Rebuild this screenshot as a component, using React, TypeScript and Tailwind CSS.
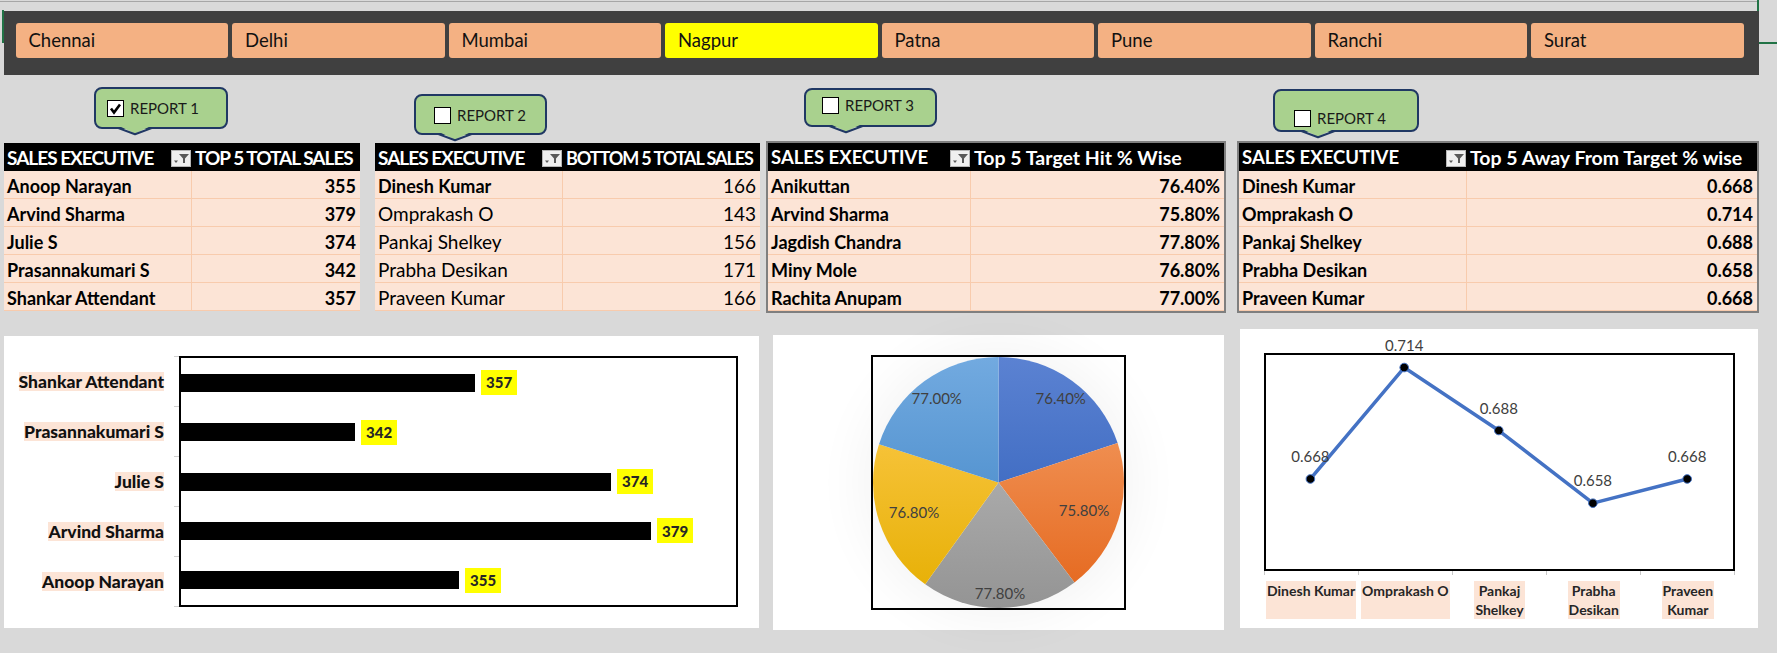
import React from 'react';

const cities = ['Chennai', 'Delhi', 'Mumbai', 'Nagpur', 'Patna', 'Pune', 'Ranchi', 'Surat'];

type Row = { name: string; value: string; bold?: boolean; numBold?: boolean };

const topSales: Row[] = [
  { name: 'Anoop Narayan', value: '355', bold: true, numBold: true },
  { name: 'Arvind Sharma', value: '379', bold: true, numBold: true },
  { name: 'Julie S', value: '374', bold: true, numBold: true },
  { name: 'Prasannakumari S', value: '342', bold: true, numBold: true },
  { name: 'Shankar Attendant', value: '357', bold: true, numBold: true },
];

const bottomSales: Row[] = [
  { name: 'Dinesh Kumar', value: '166', bold: true },
  { name: 'Omprakash O', value: '143' },
  { name: 'Pankaj Shelkey', value: '156' },
  { name: 'Prabha Desikan', value: '171' },
  { name: 'Praveen Kumar', value: '166' },
];

const targetHit: Row[] = [
  { name: 'Anikuttan', value: '76.40%', bold: true, numBold: true },
  { name: 'Arvind Sharma', value: '75.80%', bold: true, numBold: true },
  { name: 'Jagdish Chandra', value: '77.80%', bold: true, numBold: true },
  { name: 'Miny Mole', value: '76.80%', bold: true, numBold: true },
  { name: 'Rachita Anupam', value: '77.00%', bold: true, numBold: true },
];

const awayTarget: Row[] = [
  { name: 'Dinesh Kumar', value: '0.668', bold: true, numBold: true },
  { name: 'Omprakash O', value: '0.714', bold: true, numBold: true },
  { name: 'Pankaj Shelkey', value: '0.688', bold: true, numBold: true },
  { name: 'Prabha Desikan', value: '0.658', bold: true, numBold: true },
  { name: 'Praveen Kumar', value: '0.668', bold: true, numBold: true },
];

const bars = [
  { name: 'Shankar Attendant', v: 357 },
  { name: 'Prasannakumari S', v: 342 },
  { name: 'Julie S', v: 374 },
  { name: 'Arvind Sharma', v: 379 },
  { name: 'Anoop Narayan', v: 355 },
];

const slices = [
  { v: 76.4, top: '#5b82d2', bottom: '#2a5bb6' },
  { v: 75.8, top: '#f5a36c', bottom: '#e4651a' },
  { v: 77.8, top: '#bfbfbf', bottom: '#949494' },
  { v: 76.8, top: '#ffcd55', bottom: '#e5ae00' },
  { v: 77.0, top: '#72aae0', bottom: '#3a80c2' },
];

const points = [
  { lines: ['Dinesh Kumar'], v: 0.668, x: 46.4 },
  { lines: ['Omprakash O'], v: 0.714, x: 140.2 },
  { lines: ['Pankaj', 'Shelkey'], v: 0.688, x: 234.8 },
  { lines: ['Prabha', 'Desikan'], v: 0.658, x: 328.9 },
  { lines: ['Praveen', 'Kumar'], v: 0.668, x: 423.2 },
];

const FilterButton = () => (
  <div className="w-[20px] h-[17px] bg-[#efefef] border border-[#b5b5b5] flex items-center justify-center shrink-0">
    <svg width="18" height="15" viewBox="0 0 18 15">
      <path d="M7 3h10l-4 4.5V12h-2V7.5z" fill="#595959" />
      <path d="M2 9.5h4l-2 2.5z" fill="#595959" />
    </svg>
  </div>
);

function SalesTable({
  width,
  col1,
  head,
  headClass,
  head2Class,
  rows,
  framed,
}: {
  width: string;
  col1: string;
  head: string;
  headClass: string;
  head2Class: string;
  rows: Row[];
  framed?: boolean;
}) {
  return (
    <div className={`${width} shrink-0 ${framed ? 'outline-2 outline-[#7f7f7f]' : ''}`}>
      <div className="flex h-[28px] bg-black text-white">
        <div className={`${col1} flex items-center justify-between pl-[3px] pr-[1px] pt-[2px]`}>
          <span className={headClass}>SALES EXECUTIVE</span>
          <FilterButton />
        </div>
        <div className="flex-1 flex items-center pl-[3px] pt-[2px] whitespace-nowrap overflow-hidden">
          <span className={head2Class}>{head}</span>
        </div>
      </div>
      {rows.map((r) => (
        <div key={r.name} className="flex h-[28px] bg-[#fce4d6] border-b border-[#f8cbad]">
          <div
            className={`${col1} border-r border-[#f8cbad] flex items-center pl-[3px] pt-[4px] whitespace-nowrap ${
              r.bold ? 'font-bold text-[18px]' : 'text-[19px]'
            }`}
          >
            {r.name}
          </div>
          <div
            className={`flex-1 flex items-center justify-end pr-[4px] pt-[4px] ${
              r.numBold ? 'font-bold text-[18px]' : 'text-[19px]'
            }`}
          >
            {r.value}
          </div>
        </div>
      ))}
    </div>
  );
}

function Callout({
  box,
  pad,
  tip,
  label,
  checked,
}: {
  box: string;
  pad: string;
  tip: string;
  label: string;
  checked?: boolean;
}) {
  return (
    <div className={`absolute border-2 border-[#203864] rounded-[8px] bg-[#a9d18e] ${box}`}>
      <div className={`flex items-center gap-[6px] ${pad}`}>
        <div className="w-[17px] h-[17px] bg-white border-[1.5px] border-black flex items-center justify-center">
          {checked && (
            <svg width="13" height="13" viewBox="0 0 13 13">
              <path d="M2 6.5l3 4L11 2.5" fill="none" stroke="#000" strokeWidth="2.6" strokeLinejoin="miter" />
            </svg>
          )}
        </div>
        <span className="text-[15px] text-[#1a1a1a] leading-none">{label}</span>
      </div>
      <svg className={`absolute top-full ${tip}`} width="34" height="9" viewBox="0 0 34 9">
        <path d="M1 -1L17 6.5L33 -1Z" fill="#a9d18e" />
        <path d="M0 1L17 7.3L34 1" fill="none" stroke="#203864" strokeWidth="2" strokeLinejoin="round" />
      </svg>
    </div>
  );
}

function Pie() {
  const total = slices.reduce((s, x) => s + x.v, 0);
  const c = 125.5;
  const r = 125.5;
  let acc = 0;
  const paths = slices.map((s) => {
    const a0 = (acc / total) * Math.PI * 2;
    acc += s.v;
    const a1 = (acc / total) * Math.PI * 2;
    const x0 = c + r * Math.sin(a0);
    const y0 = c - r * Math.cos(a0);
    const x1 = c + r * Math.sin(a1);
    const y1 = c - r * Math.cos(a1);
    return `M${c} ${c}L${x0} ${y0}A${r} ${r} 0 0 1 ${x1} ${y1}Z`;
  });
  return (
    <svg className="absolute inset-0" width="251" height="251" viewBox="0 0 251 251">
      <defs>
        {slices.map((s, i) => (
          <linearGradient key={i} id={`pg${i}`} gradientUnits="userSpaceOnUse" x1="0" y1="0" x2="0" y2="251">
            <stop offset="0" stopColor={s.top} />
            <stop offset="1" stopColor={s.bottom} />
          </linearGradient>
        ))}
      </defs>
      {paths.map((d, i) => (
        <path key={i} d={d} fill={`url(#pg${i})`} />
      ))}
    </svg>
  );
}

export default function App() {
  const py = (v: number) => ((0.72 - v) / 0.09) * 218;

  return (
    <div className="relative w-[1777px] h-[653px] overflow-hidden bg-[#d9d9d9] [font-family:Lato,'Open_Sans',sans-serif] text-black">
      {/* sheet grid line + selected cell marks */}
      <div className="h-[11px] pt-px">
        <div className="w-[1757px] h-px bg-[#a6a6a6]" />
      </div>
      <div className="absolute left-[2px] top-[10px] w-[2px] h-[33px] bg-[#217346]" />
      <div className="absolute left-[1757px] top-0 w-[2px] h-[11px] bg-[#217346]" />
      <div className="absolute left-[1759px] top-[42px] w-[18px] h-[2px] bg-[#217346]" />

      {/* city slicer */}
      <div className="ml-[4px] w-[1755px] h-[64px] bg-[#404040] pl-[11.5px] pt-[12px] flex gap-[4px]">
        {cities.map((c) => (
          <div
            key={c}
            className={`w-[212.5px] h-[35px] rounded-[3px] flex items-center pl-[13px] pt-px text-[18.5px] text-[#111] ${
              c === 'Nagpur' ? 'bg-[#ffff00]' : 'bg-[#f4b183]'
            }`}
          >
            {c}
          </div>
        ))}
      </div>

      {/* report callouts */}
      <div className="relative h-[68px]">
        <Callout box="left-[94px] top-[12px] w-[134px] h-[42px]" pad="pl-[11px] pt-[11px]" tip="left-[22px]" label="REPORT 1" checked />
        <Callout box="left-[414px] top-[19px] w-[133px] h-[41px]" pad="pl-[18px] pt-[11px]" tip="left-[22px]" label="REPORT 2" />
        <Callout box="left-[804px] top-[13px] w-[133px] h-[39px]" pad="pl-[16px] pt-[7px]" tip="left-[23px]" label="REPORT 3" />
        <Callout box="left-[1273px] top-[14px] w-[146px] h-[43px]" pad="pl-[19px] pt-[19px]" tip="left-[26px]" label="REPORT 4" />
      </div>

      {/* tables */}
      <div className="flex items-start ml-[4px]">
        <SalesTable
          width="w-[356px]"
          col1="w-[188px]"
          head="TOP 5 TOTAL SALES"
          headClass="text-[19px] font-bold tracking-[-1px]"
          head2Class="text-[19px] font-bold tracking-[-1px]"
          rows={topSales}
        />
        <div className="w-[15px] shrink-0" />
        <SalesTable
          width="w-[385px]"
          col1="w-[188px]"
          head="BOTTOM 5 TOTAL SALES"
          headClass="text-[19px] font-bold tracking-[-1px]"
          head2Class="text-[18px] font-bold tracking-[-1.1px]"
          rows={bottomSales}
        />
        <div className="w-[8px] shrink-0" />
        <SalesTable
          width="w-[456px]"
          col1="w-[203px]"
          head="Top 5 Target Hit % Wise"
          headClass="text-[18.5px] font-bold"
          head2Class="text-[19.5px] font-bold"
          rows={targetHit}
          framed
        />
        <div className="w-[15px] shrink-0" />
        <SalesTable
          width="w-[518px]"
          col1="w-[228px]"
          head="Top 5 Away From Target % wise"
          headClass="text-[18.5px] font-bold"
          head2Class="text-[19.5px] font-bold"
          rows={awayTarget}
          framed
        />
      </div>

      {/* charts */}
      <div className="flex items-start ml-[4px] mt-[18px]">
        {/* bar chart */}
        <div className="mt-[7px] w-[755px] h-[292px] bg-white shrink-0 pt-[20px] flex">
          <div className="w-[170px] h-[251px] flex flex-col pr-[10px]">
            {bars.map((b) => (
              <div key={b.name} className="flex-1 flex items-center justify-end">
                <span className="bg-[#fce4d6] text-[17.5px] font-black leading-[19px] text-[#111]">{b.name}</span>
              </div>
            ))}
          </div>
          <div className="w-[5px] h-[251px] flex flex-col border-b border-[#d0d0d0]">
            {bars.map((b) => (
              <div key={b.name} className="flex-1 border-t border-[#d0d0d0]" />
            ))}
          </div>
          <div className="w-[559px] h-[251px] border-2 border-black flex flex-col">
            {bars.map((b) => (
              <div key={b.name} className="flex-1 flex items-center">
                <div className="h-[18px] bg-black" style={{ width: (b.v - 320) * 8 - 2 }} />
                <div className="ml-[6px] h-[25px] px-[5px] bg-[#ffff00] flex items-center text-[15px] font-black text-[#262626]">
                  {b.v}
                </div>
              </div>
            ))}
          </div>
        </div>

        {/* pie chart */}
        <div className="relative ml-[14px] mt-[6px] w-[451px] h-[295px] bg-white shrink-0 flex items-center justify-center">
          <div className="absolute left-[100px] top-[22px] w-[251px] h-[251px] rounded-full shadow-[0_0_50px_14px_rgba(0,0,0,0.045)]" />
          <div className="relative w-[255px] h-[255px] border-2 border-black">
            <Pie />
            <span className="absolute left-[187.7px] top-[40.7px] -translate-x-1/2 -translate-y-1/2 text-[15px] text-[#404040]">76.40%</span>
            <span className="absolute left-[211px] top-[152.7px] -translate-x-1/2 -translate-y-1/2 text-[15px] text-[#404040]">75.80%</span>
            <span className="absolute left-[127px] top-[235.7px] -translate-x-1/2 -translate-y-1/2 text-[15px] text-[#404040]">77.80%</span>
            <span className="absolute left-[41px] top-[154.7px] -translate-x-1/2 -translate-y-1/2 text-[15px] text-[#404040]">76.80%</span>
            <span className="absolute left-[63.7px] top-[40.7px] -translate-x-1/2 -translate-y-1/2 text-[15px] text-[#404040]">77.00%</span>
          </div>
        </div>

        {/* line chart */}
        <div className="ml-[16px] w-[518px] h-[299px] bg-white shrink-0 pt-[24px] pl-[24px]">
          <div className="relative w-[471px] h-[218px] border-2 border-black">
            <svg className="absolute inset-0 overflow-visible" width="467" height="214" viewBox="0 0 467 214">
              <polyline
                points={points.map((p) => `${p.x - 2},${py(p.v) - 2}`).join(' ')}
                fill="none"
                stroke="#4472c4"
                strokeWidth="3.5"
                strokeLinejoin="round"
              />
              {points.map((p) => (
                <circle key={p.x} cx={p.x - 2} cy={py(p.v) - 2} r="4.3" fill="#000" stroke="#4472c4" strokeWidth="1" />
              ))}
            </svg>
            {points.map((p) => (
              <span
                key={p.x}
                className="absolute -translate-x-1/2 -translate-y-1/2 text-[15px] text-[#404040] leading-none"
                style={{ left: p.x - 2, top: py(p.v) - 25 }}
              >
                {p.v.toFixed(3)}
              </span>
            ))}
          </div>
          <div className="w-[471px] h-[4px] flex justify-between">
            {[0, 1, 2, 3, 4, 5].map((i) => (
              <div key={i} className="w-px h-full bg-[#c8c8c8]" />
            ))}
          </div>
          <div className="w-[471px] mt-[6px] grid grid-cols-5">
            {points.map((p) => (
              <div key={p.x} className="flex justify-center">
                <span className="bg-[#fce4d6] text-center text-[14px] font-bold leading-[19px] text-[#262626] px-px">
                  {p.lines.map((l, i) => (
                    <React.Fragment key={l}>
                      {i > 0 && <br />}
                      {l}
                    </React.Fragment>
                  ))}
                </span>
              </div>
            ))}
          </div>
        </div>
      </div>
    </div>
  );
}
